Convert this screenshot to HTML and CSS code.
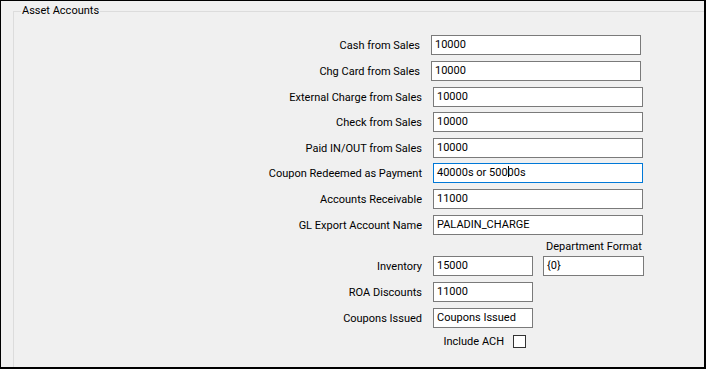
FILE: index.html
```html
<!DOCTYPE html>
<html>
<head>
<meta charset="utf-8">
<link rel="stylesheet" href="styles.css">
</head>
<body>
<div class="window">
  <fieldset class="group">
    <legend class="group-title">Asset Accounts</legend>
    <div class="form">
      <div class="row shift"><span class="label">Cash from Sales</span><div class="input wide">10000</div></div>
      <div class="row shift"><span class="label">Chg Card from Sales</span><div class="input wide">10000</div></div>
      <div class="row"><span class="label">External Charge from Sales</span><div class="input wide">10000</div></div>
      <div class="row tight"><span class="label">Check from Sales</span><div class="input wide">10000</div></div>
      <div class="row"><span class="label">Paid IN/OUT from Sales</span><div class="input wide">10000</div></div>
      <div class="row tight"><span class="label">Coupon Redeemed as Payment</span><div class="input wide focused">40000s or 500<span class="caret"></span>00s</div></div>
      <div class="row"><span class="label">Accounts Receivable</span><div class="input wide">11000</div></div>
      <div class="row"><span class="label">GL Export Account Name</span><div class="input wide">PALADIN_CHARGE</div></div>
      <div class="dept-head"><span class="dept-label">Department Format</span></div>
      <div class="row first"><span class="label">Inventory</span><div class="input short">15000</div><div class="input dept">{0}</div></div>
      <div class="row"><span class="label">ROA Discounts</span><div class="input short">11000</div></div>
      <div class="row"><span class="label">Coupons Issued</span><div class="input short">Coupons Issued</div></div>
      <div class="check-row"><span class="check-label">Include ACH</span><span class="checkbox"></span></div>
    </div>
  </fieldset>
</div>
</body>
</html>
```
FILE: styles.css
```css
html, body {
  margin: 0;
  padding: 0;
  background: #f0f0f0;
}
.window {
  width: 706px;
  height: 369px;
  box-sizing: border-box;
  border-style: solid;
  border-color: #000;
  border-width: 1px 2px 2px 1px;
  background: #f0f0f0;
  overflow: hidden;
  font-family: Roboto, "Liberation Sans", sans-serif;
  font-size: 11px;
  color: #000;
}
.group {
  margin: 3px 0 0 12px;
  padding: 17px 0 0 7px;
  border: 1px solid #dcdcdc;
  border-right: none;
  border-bottom: none;
  height: 400px;
  min-width: 0;
}
.group-title {
  padding: 0 1px;
  line-height: 14px;
}
.form {
  display: flex;
  flex-direction: column;
}
.row {
  display: flex;
  align-items: center;
  height: 20px;
  margin-top: 6px;
}
.row:first-child, .row.first { margin-top: 0; }
.row.tight { margin-top: 5px; }
.row.shift { margin-left: -2px; }
.label {
  width: 401px;
  text-align: right;
  margin-right: 11px;
  white-space: nowrap;
}
.input {
  box-sizing: border-box;
  height: 20px;
  border: 1px solid #7a7a7a;
  background: #fff;
  padding: 0 3px;
  line-height: 18px;
  white-space: nowrap;
  overflow: hidden;
}
.input.wide { width: 210px; }
.input.short { width: 100px; }
.input.dept { width: 101px; margin-left: 10px; }
.input.focused { border-color: #0078d7; }
.caret {
  display: inline-block;
  width: 1px;
  height: 11px;
  background: #000;
  vertical-align: -1px;
  margin-right: -1px;
}
.dept-head {
  display: flex;
  align-items: flex-end;
  height: 21px;
}
.dept-label {
  margin-left: 525px;
  line-height: 14px;
  padding-bottom: 2px;
}
.check-row {
  display: flex;
  align-items: center;
  height: 13px;
  margin-top: 7px;
}
.check-label {
  width: 483px;
  text-align: right;
  margin-right: 9px;
}
.checkbox {
  box-sizing: border-box;
  width: 13px;
  height: 13px;
  border: 1px solid #333;
  background: #fff;
}
```
